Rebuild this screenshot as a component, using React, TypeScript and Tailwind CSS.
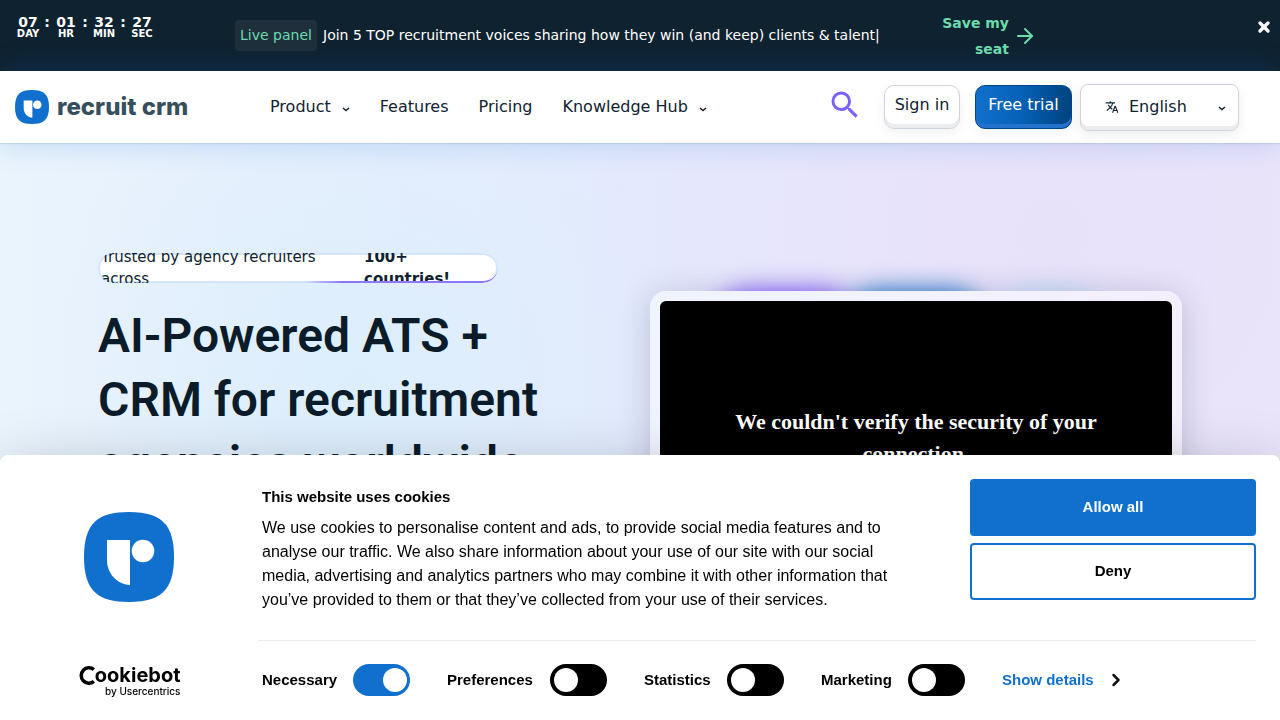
import React, { useState } from "react";
import { ArrowRight, ChevronRight, X } from "lucide-react";
import { MdSearch, MdTranslate } from "react-icons/md";

const countdown = [
    { value: "07", label: "DAY" },
    { value: "01", label: "HR" },
    { value: "32", label: "MIN" },
    { value: "27", label: "SEC" },
];

const navLinks = [
    { text: "Product", menu: true },
    { text: "Features", menu: false },
    { text: "Pricing", menu: false },
    { text: "Knowledge Hub", menu: true },
];

const categories = [
    { id: "necessary", text: "Necessary", width: "w-[148px]", on: true },
    { id: "preferences", text: "Preferences", width: "w-[160px]", on: false },
    { id: "statistics", text: "Statistics", width: "w-[140px]", on: false },
    { id: "marketing", text: "Marketing", width: "w-[144px]", on: false },
];

function LogoMark({ className }: { className?: string }) {
    return (
        <svg viewBox="0 0 90 90" className={className} aria-hidden="true">
            <path d="M45 0C76 0 90 11 90 45S76 90 45 90 0 79 0 45 14 0 45 0Z" fill="#1170cd" />
            <path d="M23 28H46V73C32 72 23 61 23 48Z" fill="#fff" />
            <circle cx="59" cy="39" r="11.3" fill="#fff" />
        </svg>
    );
}

function Caret() {
    return (
        <svg viewBox="0 0 8 5" className="mt-1 h-[5px] w-2" fill="none" aria-hidden="true">
            <path d="M1 1l3 2.6L7 1" stroke="#0f2230" strokeWidth="1.4" />
        </svg>
    );
}

function PromoBar() {
    return (
        <div className="flex h-[71px] shrink-0 bg-[#0f2230] pr-2 pl-[15px] text-white">
            <div className="flex w-[220px] shrink-0 pt-[14px]">
                {countdown.map((item, index) => (
                    <React.Fragment key={item.label}>
                        {index > 0 && <span className="w-3 text-center text-sm leading-4 font-bold">:</span>}
                        <div className="w-[26px] text-center font-bold">
                            <p className="text-[14px] leading-4">{item.value}</p>
                            <p className="text-[10px] leading-[7px]">{item.label}</p>
                        </div>
                    </React.Fragment>
                ))}
            </div>
            <div className="flex h-full w-[662px] shrink-0 items-center gap-[6px] text-[14px]">
                <span className="w-[82px] rounded bg-[#1f303c] py-[5px] text-center leading-[21px] text-[#6cdbae]">Live panel</span>
                <p className="whitespace-nowrap">Join 5 TOP recruitment voices sharing how they win (and keep) clients &amp; talent|</p>
            </div>
            <a href="#seat" className="ml-10 flex items-center gap-1 text-[14px] leading-[26px] font-bold text-[#6cdbae]">
                <span className="w-[72px] text-right">Save my seat</span>
                <ArrowRight className="size-6" />
            </a>
            <button type="button" aria-label="Close" className="mt-[19px] ml-auto size-4">
                <X className="size-4" strokeWidth={5} />
            </button>
        </div>
    );
}

function Header() {
    return (
        <header className="relative z-10 flex h-[72px] shrink-0 items-center bg-white pr-[41px] pl-[15px] shadow-[0_0_30px_rgba(17,112,205,0.22),0_1px_1px_rgba(80,110,160,0.15)]">
            <a href="#home" className="flex w-[255px] shrink-0 items-center gap-2">
                <LogoMark className="size-[34px]" />
                <span className="font-['Inter',sans-serif] text-2xl font-extrabold text-[#364f5e]">recruit crm</span>
            </a>
            <nav className="flex gap-[30px]">
                {navLinks.map((item) => (
                    <a key={item.text} href="#menu" className="flex items-center gap-[11px] whitespace-nowrap">
                        {item.text}
                        {item.menu && <Caret />}
                    </a>
                ))}
            </nav>
            <div className="ml-auto flex items-center">
                <button type="button" aria-label="Search" className="mr-[21px] pb-1">
                    <MdSearch className="size-9 text-[#7b61ff]" />
                </button>
                <button type="button" className="mr-[15px] h-11 w-[76px] rounded-[10px] border border-[#cfd3dc] pb-1 whitespace-nowrap shadow-[inset_0_-4px_0_#ebecee,0_4px_12px_rgba(15,34,48,0.06)]">
                    Sign in
                </button>
                <button type="button" className="mr-2 h-11 w-[97px] rounded-[10px] border border-[#00468a] bg-linear-to-r from-[#1170cd] via-[#0560b5] to-[#004380] pb-1 whitespace-nowrap text-white shadow-[inset_0_-4px_0_#2373cc,0_4px_12px_rgba(15,34,48,0.06)]">
                    Free trial
                </button>
                <button type="button" className="flex h-[47px] w-[159px] items-center rounded-[8px] border border-[#cfd3dc] pr-3 pb-px pl-6 shadow-[inset_0_-4px_0_#ebecee,0_4px_12px_rgba(15,34,48,0.08)]">
                    <MdTranslate className="mr-[10px] size-[14px]" />
                    English
                    <span className="ml-auto"><Caret /></span>
                </button>
            </div>
        </header>
    );
}

function Hero() {
    return (
        <main className="grid flex-1 grid-cols-2 gap-5 bg-[radial-gradient(circle_at_28%_42%,#dceefc_0%,transparent_34%),radial-gradient(circle_at_82%_16%,#e8e1fa_0%,transparent_40%),linear-gradient(90deg,#eaf4fd_0%,#e3eafd_48%,#ebe6fb_100%)] px-[98px]">
            <div className="pt-[110px]">
                <div className="relative flex h-[30px] w-[400px] items-center overflow-hidden rounded-full bg-white pl-[3px] text-[15px] leading-[22px] shadow-[inset_0_0_0_2px_#d3e4fb]">
                    <span className="w-[263px] shrink-0 pr-8">Trusted by agency recruiters across</span>
                    <strong className="w-[100px]">100+ countries!</strong>
                    <span className="absolute inset-y-0 right-0 left-[205px] rounded-r-full border-b-2 border-[#8f75ff] mask-l-from-80%" />
                </div>
                <h1 className="mt-[21px] max-w-[460px] font-['Roboto',sans-serif] text-5xl leading-[64px] font-semibold text-[#0a1c29]">
                    AI-Powered ATS + CRM for recruitment agencies worldwide
                </h1>
            </div>
            <div className="relative mt-[148px]">
                <div className="absolute top-0 left-[60px] h-20 w-[150px] rounded-full bg-[#7b4dff] blur-[12px]" />
                <div className="absolute top-0 left-[190px] h-20 w-[150px] rounded-full bg-[#1170cd] blur-[12px]" />
                <div className="absolute top-0 left-[340px] h-20 w-[120px] rounded-full bg-[#b9dcf8] blur-[12px]" />
                <div className="relative rounded-2xl bg-linear-to-r from-[#eff4fe] to-[#f4effc] p-[10px] shadow-[0_4px_32px_rgba(40,40,80,0.22)]">
                    <div className="flex aspect-video items-center justify-center rounded-md bg-black px-16 pb-[14px] text-center font-['Liberation_Serif',serif] text-[22px] leading-8 font-bold text-white">
                        We couldn't verify the security of your connection.
                    </div>
                </div>
            </div>
        </main>
    );
}

function CookieDialog() {
    const [open, setOpen] = useState(true);
    if (!open) return null;

    return (
        <div role="dialog" aria-labelledby="cookie-title" className="fixed inset-x-0 bottom-0 z-20 flex rounded-t-lg bg-white pr-6 font-['Liberation_Sans',Arial,sans-serif] text-[15px] text-[#141414] shadow-[0_16px_60px_rgba(0,0,0,0.25)]">
            <div className="flex w-[258px] shrink-0 flex-col items-center justify-between pt-[57px] pb-6">
                <LogoMark className="size-[90px]" />
                <div className="w-[103px] text-right font-['Inter',sans-serif] text-black">
                    <p className="flex items-center text-xl leading-[22px] font-bold whitespace-nowrap">
                        <svg viewBox="0 0 18 22" className="h-[22px] w-[18px]" fill="none" role="img" aria-label="C">
                            <path d="M16.5 5.4A8 8 0 1 0 16.5 17.6" stroke="#000" strokeWidth="3.6" />
                        </svg>
                        ookiebot
                    </p>
                    <p className="text-[10px] leading-[10px] font-medium">by Usercentrics</p>
                </div>
            </div>
            <div className="flex-1">
                <div className="flex justify-between pt-6 pb-7 pl-1">
                    <div className="max-w-[640px] pt-[6px] text-black">
                        <h2 id="cookie-title" className="mb-[7px] leading-6 font-bold">This website uses cookies</h2>
                        <p className="text-base leading-6">
                            We use cookies to personalise content and ads, to provide social media features and to analyse our traffic. We also share information about your use of our site with our social media, advertising and analytics partners who may combine it with other information that you’ve provided to them or that they’ve collected from your use of their services.
                        </p>
                    </div>
                    <div className="flex w-[286px] shrink-0 flex-col gap-[7px] font-bold">
                        <button type="button" onClick={() => setOpen(false)} className="h-[57px] rounded bg-[#1170cd] text-white">Allow all</button>
                        <button type="button" onClick={() => setOpen(false)} className="h-[57px] rounded border-2 border-[#1170cd] text-black">Deny</button>
                    </div>
                </div>
                <div className="flex items-center gap-[37px] border-t border-[#ebebeb] pt-[23px] pb-6 pl-1 font-bold text-black">
                    {categories.map((item) => (
                        <div key={item.id} className={`flex items-center justify-between ${item.width}`}>
                            <label htmlFor={item.id}>{item.text}</label>
                            <input
                                id={item.id}
                                type="checkbox"
                                defaultChecked={item.on}
                                disabled={item.on}
                                className="flex h-8 w-[57px] appearance-none items-center rounded-full bg-black pr-[3px] pl-1 before:size-6 before:rounded-full before:bg-white checked:justify-end checked:bg-[#1170cd]"
                            />
                        </div>
                    ))}
                    <a href="#details" className="flex items-center gap-3 text-[#1170cd]">
                        Show details
                        <ChevronRight className="size-5 text-[#141414]" strokeWidth={3} />
                    </a>
                </div>
            </div>
        </div>
    );
}

export default function App() {
    return (
        <div className="flex h-screen flex-col overflow-hidden font-['DejaVu_Sans',sans-serif] text-base text-[#0f2230]">
            <PromoBar />
            <Header />
            <Hero />
            <CookieDialog />
        </div>
    );
}
